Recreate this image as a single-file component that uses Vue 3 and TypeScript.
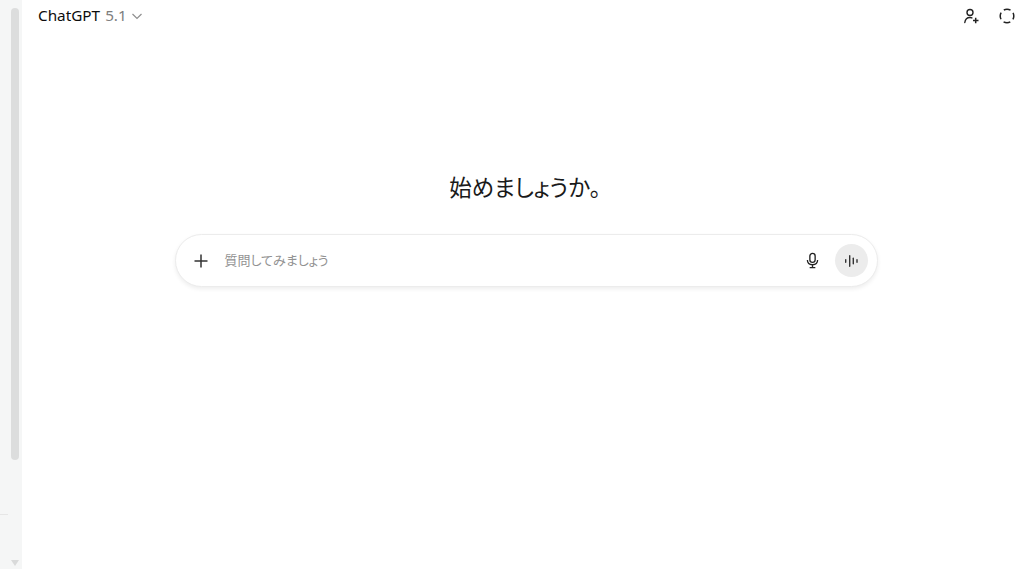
<template>
  <div class="page">
    <aside class="rail">
      <div class="scroll-thumb"></div>
      <div class="rail-line"></div>
      <div class="scroll-arrow"></div>
    </aside>

    <main class="main">
      <header class="topbar">
        <button class="model">
          <span>ChatGPT</span>
          <span class="version">5.1</span>
          <svg class="chevron" width="12" height="12" viewBox="0 0 12 12" fill="none">
            <path d="M1.500 4l4.500 4.500L10.500 4" stroke="#8f8f8f" stroke-width="1.200" />
          </svg>
        </button>
        <div class="actions">
          <svg width="18" height="18" viewBox="0 0 18 18" fill="none" stroke="#222" stroke-width="1.400">
            <circle cx="8" cy="5.500" r="3" />
            <path d="M2.800 15.500c.4-3 2.500-5 5.200-5 .7 0 1.300.1 1.900.4" stroke-linecap="round" />
            <path d="M11 13.500h5.500M13.700 10.800v5.400" stroke-width="1.500" />
          </svg>
          <svg width="18" height="18" viewBox="0 0 18 18" fill="none" stroke="#222" stroke-width="1.500">
            <circle cx="9" cy="9" r="6.800" stroke-dasharray="7 3.680" stroke-dashoffset="3.500" />
          </svg>
        </div>
      </header>

      <section class="center">
        <h1 class="title">始めましょうか。</h1>
        <div class="composer">
          <svg width="16" height="16" viewBox="0 0 16 16" fill="none" stroke="#333" stroke-width="1.500">
            <path d="M8 1.500v13M1.500 8h13" />
          </svg>
          <span class="placeholder">質問してみましょう</span>
          <svg class="mic" width="17" height="17" viewBox="0 0 18 18" fill="none" stroke="#222" stroke-width="1.400">
            <rect x="6.200" y="1.500" width="5.600" height="9.500" rx="2.800" />
            <path d="M3.600 8.500c0 3.200 2.300 5 5.400 5s5.400-1.800 5.400-5M9 13.500v3M6 16.600h6" />
          </svg>
          <div class="voice">
            <svg width="16" height="16" viewBox="0 0 16 16" fill="none" stroke="#333" stroke-width="1.400" stroke-linecap="round">
              <path v-for="bar in bars" :key="bar.x" :d="`M${bar.x} ${8 - bar.h}v${bar.h * 2}`" />
            </svg>
          </div>
        </div>
      </section>
    </main>
  </div>
</template>

<script setup lang="ts">
interface Bar {
  x: number;
  h: number;
}

const bars: Bar[] = [
  { x: 2.700, h: 1.300 },
  { x: 6.700, h: 5.300 },
  { x: 10.300, h: 2.800 },
  { x: 14, h: 1.300 },
];
</script>

<style>
html,
body {
  margin: 0;
  background: #fff;
  overflow: hidden;
}
</style>

<style scoped>
.page {
  display: flex;
  width: 1024px;
  height: 569px;
  overflow: hidden;
  background: #fff;
  color: #0d0d0d;
  font-family: "Noto Sans", "Noto Sans CJK JP", sans-serif;
}

.rail {
  display: flex;
  flex-direction: column;
  flex: none;
  width: 22px;
  box-sizing: border-box;
  padding-top: 8px;
  background: #f5f6f6;
}

.scroll-thumb {
  width: 8px;
  height: 452px;
  margin-left: 11px;
  border-radius: 4px;
  background: #dcdddd;
}

.rail-line {
  width: 8px;
  height: 1px;
  margin-top: 54px;
  background: #e6e6e6;
}

.scroll-arrow {
  width: 0;
  height: 0;
  margin: 45px 0 0 11px;
  border-left: 4px solid transparent;
  border-right: 4px solid transparent;
  border-top: 6px solid #d9dada;
}

.main {
  flex: 1;
  min-width: 0;
}

.topbar {
  display: flex;
  align-items: center;
  justify-content: space-between;
  height: 31px;
  padding-left: 16px;
}

.model {
  display: flex;
  align-items: center;
  gap: 5px;
  padding: 0;
  border: none;
  background: none;
  color: #0d0d0d;
  font-family: inherit;
  font-size: 15.300px;
  line-height: 31px;
}

.version {
  color: #7d7d7d;
}

.chevron {
  margin-left: -1px;
}

.actions {
  display: flex;
  align-items: center;
  gap: 18px;
  margin-right: 8px;
}

.center {
  display: flex;
  flex-direction: column;
  align-items: center;
  padding-top: 141px;
  padding-left: 6px;
}

.title {
  margin: 0 2px 0 0;
  font-size: 22.500px;
  font-weight: 400;
  line-height: 32px;
  font-feature-settings: "palt";
  color: #1a1a1a;
}

.composer {
  display: flex;
  align-items: center;
  box-sizing: border-box;
  width: 703px;
  height: 53px;
  margin-top: 30px;
  padding: 0 9px 0 17px;
  border: 1px solid #ececec;
  border-radius: 27px;
  background: #fff;
  box-shadow: 0 2px 4px rgba(0, 0, 0, 0.07);
}

.placeholder {
  flex: 1;
  margin-left: 16px;
  padding-bottom: 2px;
  color: #929292;
  font-size: 13px;
  font-feature-settings: "palt";
}

.mic {
  margin-right: 14px;
}

.voice {
  display: flex;
  align-items: center;
  justify-content: center;
  width: 33px;
  height: 33px;
  border-radius: 50%;
  background: #ececec;
}
</style>
